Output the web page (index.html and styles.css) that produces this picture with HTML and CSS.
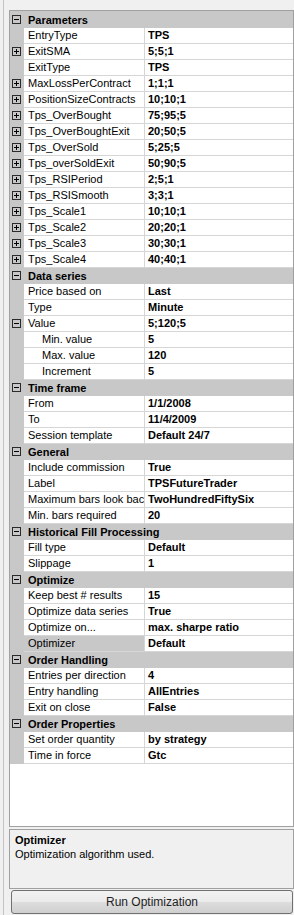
FILE: index.html
```html
<!DOCTYPE html>
<html lang="en">
<head>
    <meta charset="UTF-8">
    <meta name="viewport" content="width=device-width, initial-scale=1.0">
    <title>Strategy Optimization</title>
    <link rel="stylesheet" href="styles.css">
</head>
<body>
    <svg class="defs" width="0" height="0">
        <symbol id="plus" viewBox="0 0 9 9">
            <rect x="0.5" y="0.5" width="8" height="8" fill="none" stroke="#2b2b2b"/>
            <path d="M2 4.5h5M4.5 2v5" stroke="#000"/>
        </symbol>
        <symbol id="minus" viewBox="0 0 9 9">
            <rect x="0.5" y="0.5" width="8" height="8" fill="none" stroke="#2b2b2b"/>
            <path d="M2 4.5h5" stroke="#000"/>
        </symbol>
    </svg>

    <div class="frame">
        <!-- property grid -->
        <div class="grid">
            <div class="list">
                <div class="row cat"><span class="gut"><svg class="exp"><use href="#minus"/></svg></span><span class="cat-name">Parameters</span></div>
                <div class="row"><span class="gut"></span><span class="name">EntryType</span><span class="val">TPS</span></div>
                <div class="row"><span class="gut"><svg class="exp"><use href="#plus"/></svg></span><span class="name">ExitSMA</span><span class="val">5;5;1</span></div>
                <div class="row"><span class="gut"></span><span class="name">ExitType</span><span class="val">TPS</span></div>
                <div class="row"><span class="gut"><svg class="exp"><use href="#plus"/></svg></span><span class="name">MaxLossPerContract</span><span class="val">1;1;1</span></div>
                <div class="row"><span class="gut"><svg class="exp"><use href="#plus"/></svg></span><span class="name">PositionSizeContracts</span><span class="val">10;10;1</span></div>
                <div class="row"><span class="gut"><svg class="exp"><use href="#plus"/></svg></span><span class="name">Tps_OverBought</span><span class="val">75;95;5</span></div>
                <div class="row"><span class="gut"><svg class="exp"><use href="#plus"/></svg></span><span class="name">Tps_OverBoughtExit</span><span class="val">20;50;5</span></div>
                <div class="row"><span class="gut"><svg class="exp"><use href="#plus"/></svg></span><span class="name">Tps_OverSold</span><span class="val">5;25;5</span></div>
                <div class="row"><span class="gut"><svg class="exp"><use href="#plus"/></svg></span><span class="name">Tps_overSoldExit</span><span class="val">50;90;5</span></div>
                <div class="row"><span class="gut"><svg class="exp"><use href="#plus"/></svg></span><span class="name">Tps_RSIPeriod</span><span class="val">2;5;1</span></div>
                <div class="row"><span class="gut"><svg class="exp"><use href="#plus"/></svg></span><span class="name">Tps_RSISmooth</span><span class="val">3;3;1</span></div>
                <div class="row"><span class="gut"><svg class="exp"><use href="#plus"/></svg></span><span class="name">Tps_Scale1</span><span class="val">10;10;1</span></div>
                <div class="row"><span class="gut"><svg class="exp"><use href="#plus"/></svg></span><span class="name">Tps_Scale2</span><span class="val">20;20;1</span></div>
                <div class="row"><span class="gut"><svg class="exp"><use href="#plus"/></svg></span><span class="name">Tps_Scale3</span><span class="val">30;30;1</span></div>
                <div class="row"><span class="gut"><svg class="exp"><use href="#plus"/></svg></span><span class="name">Tps_Scale4</span><span class="val">40;40;1</span></div>

                <div class="row cat"><span class="gut"><svg class="exp"><use href="#minus"/></svg></span><span class="cat-name">Data series</span></div>
                <div class="row"><span class="gut"></span><span class="name">Price based on</span><span class="val">Last</span></div>
                <div class="row"><span class="gut"></span><span class="name">Type</span><span class="val">Minute</span></div>
                <div class="row"><span class="gut"><svg class="exp"><use href="#minus"/></svg></span><span class="name">Value</span><span class="val">5;120;5</span></div>
                <div class="row"><span class="gut"></span><span class="name sub">Min. value</span><span class="val">5</span></div>
                <div class="row"><span class="gut"></span><span class="name sub">Max. value</span><span class="val">120</span></div>
                <div class="row"><span class="gut"></span><span class="name sub">Increment</span><span class="val">5</span></div>

                <div class="row cat"><span class="gut"><svg class="exp"><use href="#minus"/></svg></span><span class="cat-name">Time frame</span></div>
                <div class="row"><span class="gut"></span><span class="name">From</span><span class="val">1/1/2008</span></div>
                <div class="row"><span class="gut"></span><span class="name">To</span><span class="val">11/4/2009</span></div>
                <div class="row"><span class="gut"></span><span class="name">Session template</span><span class="val">Default 24/7</span></div>

                <div class="row cat"><span class="gut"><svg class="exp"><use href="#minus"/></svg></span><span class="cat-name">General</span></div>
                <div class="row"><span class="gut"></span><span class="name">Include commission</span><span class="val">True</span></div>
                <div class="row"><span class="gut"></span><span class="name">Label</span><span class="val">TPSFutureTrader</span></div>
                <div class="row"><span class="gut"></span><span class="name">Maximum bars look bac</span><span class="val">TwoHundredFiftySix</span></div>
                <div class="row"><span class="gut"></span><span class="name">Min. bars required</span><span class="val">20</span></div>

                <div class="row cat"><span class="gut"><svg class="exp"><use href="#minus"/></svg></span><span class="cat-name">Historical Fill Processing</span></div>
                <div class="row"><span class="gut"></span><span class="name">Fill type</span><span class="val">Default</span></div>
                <div class="row"><span class="gut"></span><span class="name">Slippage</span><span class="val">1</span></div>

                <div class="row cat"><span class="gut"><svg class="exp"><use href="#minus"/></svg></span><span class="cat-name">Optimize</span></div>
                <div class="row"><span class="gut"></span><span class="name">Keep best # results</span><span class="val">15</span></div>
                <div class="row"><span class="gut"></span><span class="name">Optimize data series</span><span class="val">True</span></div>
                <div class="row"><span class="gut"></span><span class="name">Optimize on...</span><span class="val">max. sharpe ratio</span></div>
                <div class="row"><span class="gut"></span><span class="name selected">Optimizer</span><span class="val">Default</span></div>

                <div class="row cat"><span class="gut"><svg class="exp"><use href="#minus"/></svg></span><span class="cat-name">Order Handling</span></div>
                <div class="row"><span class="gut"></span><span class="name">Entries per direction</span><span class="val">4</span></div>
                <div class="row"><span class="gut"></span><span class="name">Entry handling</span><span class="val">AllEntries</span></div>
                <div class="row"><span class="gut"></span><span class="name">Exit on close</span><span class="val">False</span></div>

                <div class="row cat"><span class="gut"><svg class="exp"><use href="#minus"/></svg></span><span class="cat-name">Order Properties</span></div>
                <div class="row"><span class="gut"></span><span class="name">Set order quantity</span><span class="val">by strategy</span></div>
                <div class="row"><span class="gut"></span><span class="name">Time in force</span><span class="val">Gtc</span></div>
            </div>
        </div>

        <!-- help box under the grid -->
        <div class="help">
            <div class="help-title">Optimizer</div>
            <div class="help-text">Optimization algorithm used.</div>
        </div>

        <button class="run">Run Optimization</button>
    </div>
</body>
</html>
```

FILE: styles.css
```css
/* property grid window */
html, body {
    margin: 0;
    padding: 0;
    height: 915px;
    overflow: hidden;
}
body {
    background-color: #f0f0f0;
    font-family: "Liberation Sans", Arial, sans-serif;
    font-size: 11px;
    color: #000;
}
.defs {
    position: absolute;
    width: 0;
    height: 0;
}
.frame {
    margin-left: 3px;
    border-left: 1px solid #c3c3c3;
    padding: 10px 0 0 5px;
    width: 285px;
    height: 905px;
}
.grid {
    box-sizing: border-box;
    height: 817px;
    border: 1px solid #a0a0a0;
    background-color: #fff;
    overflow: hidden;
}
.list {
    border-top: 1px solid #c8c8c8;
}
.row {
    display: grid;
    grid-template-columns: 14px 121px 1fr;
    height: 16px;
    line-height: 15px;
    white-space: nowrap;
}
.gut {
    background-color: #c8c8c8;
    display: flex;
    align-items: flex-start;
    padding: 3px 0 0 2px;
    box-sizing: border-box;
}
.exp {
    width: 9px;
    height: 9px;
    display: block;
}
.name {
    overflow: hidden;
    padding-left: 4px;
    border-right: 1px solid #d6d6d6;
    border-bottom: 1px solid #d6d6d6;
}
.name.sub {
    padding-left: 18px;
}
.name.selected {
    background-color: #c8c8c8;
}
.val {
    overflow: hidden;
    padding-left: 3px;
    font-weight: bold;
    border-bottom: 1px solid #d6d6d6;
}
.cat {
    background-color: #c8c8c8;
}
.cat-name {
    grid-column: 2 / 4;
    padding-left: 4px;
    font-weight: bold;
    line-height: 16px;
}
/* description box */
.help {
    box-sizing: border-box;
    height: 60px;
    margin-top: 2px;
    border: 1px solid #a0a0a0;
    padding: 3px 0 0 5px;
    line-height: 14px;
}
.help-title {
    font-weight: bold;
}
.run {
    display: block;
    box-sizing: border-box;
    width: 282px;
    height: 24px;
    margin: 1px 0 0 2px;
    border: 1px solid #707070;
    border-radius: 3px;
    background: linear-gradient(#f2f2f2 0%, #ebebeb 50%, #dddddd 51%, #cfcfcf 100%);
    font-family: "Liberation Sans", Arial, sans-serif;
    font-size: 12px;
    color: #1e1e1e;
    padding: 0;
}
```
